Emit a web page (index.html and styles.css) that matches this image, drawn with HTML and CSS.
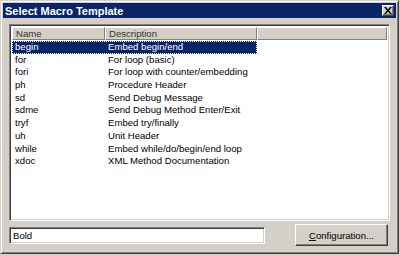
FILE: index.html
```html
<!DOCTYPE html>
<html lang="en">
<head>
    <meta charset="UTF-8">
    <title>Select Macro Template</title>
    <link rel="stylesheet" href="styles.css">
</head>
<body>
    <div class="window">
        <div class="titlebar">
            <span class="title">Select Macro Template</span>
            <button class="close-btn">
                <svg width="8" height="7" viewBox="0 0 8 7">
                    <path d="M0 0h2l2 2.5L6 0h2L5 3.5 8 7H6L4 4.5 2 7H0l3-3.5z" fill="#000"/>
                </svg>
            </button>
        </div>

        <div class="content">
            <div class="list">
                <div class="list-header">
                    <div class="col-name">Name</div>
                    <div class="col-desc">Description</div>
                    <div class="col-rest"></div>
                </div>
                <div class="row selected">
                    <div class="cell-sel"><span class="cell-name">begin</span><span class="cell-desc">Embed begin/end</span></div>
                </div>
                <div class="row"><span class="cell-name">for</span><span class="cell-desc">For loop (basic)</span></div>
                <div class="row"><span class="cell-name">fori</span><span class="cell-desc">For loop with counter/embedding</span></div>
                <div class="row"><span class="cell-name">ph</span><span class="cell-desc">Procedure Header</span></div>
                <div class="row"><span class="cell-name">sd</span><span class="cell-desc">Send Debug Message</span></div>
                <div class="row"><span class="cell-name">sdme</span><span class="cell-desc">Send Debug Method Enter/Exit</span></div>
                <div class="row"><span class="cell-name">tryf</span><span class="cell-desc">Embed try/finally</span></div>
                <div class="row"><span class="cell-name">uh</span><span class="cell-desc">Unit Header</span></div>
                <div class="row"><span class="cell-name">while</span><span class="cell-desc">Embed while/do/begin/end loop</span></div>
                <div class="row"><span class="cell-name">xdoc</span><span class="cell-desc">XML Method Documentation</span></div>
            </div>

            <div class="bottom">
                <input class="text-box" type="text" value="Bold">
                <button class="btn"><u>C</u>onfiguration...</button>
            </div>
        </div>
    </div>
</body>
</html>
```

FILE: styles.css
```css
* {
    margin: 0;
    padding: 0;
    box-sizing: border-box;
}

body {
    background: #d4d0c8;
    font-family: 'Liberation Sans', sans-serif;
    font-size: 9.6px;
    color: #000;
}

.window {
    width: 399px;
    height: 254px;
    background: #d4d0c8;
    border: 1px solid;
    border-color: #d4d0c8 #404040 #404040 #d4d0c8;
    box-shadow: inset 1px 1px 0 #fff, inset -1px -1px 0 #808080;
    padding: 2px;
    display: flex;
    flex-direction: column;
}

.titlebar {
    height: 15px;
    background: #0a246a;
    display: flex;
    align-items: center;
    justify-content: space-between;
    padding: 0 2px 0 2px;
}

.title {
    color: #fff;
    font-family: 'Liberation Sans', sans-serif;
    font-weight: bold;
    font-size: 11px;
}

.close-btn {
    width: 12px;
    height: 11px;
    background: #d4d0c8;
    border: 1px solid;
    border-color: #fff #404040 #404040 #fff;
    box-shadow: inset -1px -1px 0 #808080;
    display: flex;
    align-items: center;
    justify-content: center;
}

.content {
    flex: 1;
    padding: 6px 6px 0 6px;
    display: flex;
    flex-direction: column;
}

.list {
    height: 197px;
    background: #fff;
    border: 1px solid;
    border-color: #808080 #fff #fff #808080;
    box-shadow: inset 1px 1px 0 #404040, inset -1px -1px 0 #d4d0c8;
    padding: 2px;
}

.list-header {
    display: flex;
    height: 13px;
    line-height: 11px;
}

.list-header div {
    background: #d4d0c8;
    border: 1px solid;
    border-color: #fff #808080 #808080 #fff;
    padding-left: 3px;
    color: #333;
}

.col-name {
    width: 93px;
}

.col-desc {
    width: 152px;
}

.col-rest {
    flex: 1;
}

.row {
    height: 12.7px;
    line-height: 12.7px;
    display: flex;
    white-space: nowrap;
}

.cell-name {
    width: 93px;
    padding-left: 3px;
}

.cell-desc {
    padding-left: 3px;
}

.selected {
    margin-top: 1px;
}

.cell-sel {
    width: 245px;
    display: flex;
    background: #0a246a;
    color: #fff;
    outline: 1px dotted #fff;
    outline-offset: -1px;
}

.bottom {
    display: flex;
    align-items: center;
    justify-content: space-between;
    margin-top: 3px;
    padding-right: 2px;
}

.text-box {
    width: 256px;
    height: 17px;
    border: 1px solid;
    border-color: #808080 #fff #fff #808080;
    box-shadow: inset 1px 1px 0 #404040, inset -1px -1px 0 #d4d0c8;
    font-family: 'Liberation Sans', sans-serif;
    font-size: 9.6px;
    padding-left: 3px;
    color: #000;
}

.btn {
    width: 93px;
    height: 22px;
    background: #d4d0c8;
    border: 1px solid;
    border-color: #fff #404040 #404040 #fff;
    box-shadow: inset -1px -1px 0 #808080;
    font-family: 'Liberation Sans', sans-serif;
    font-size: 9.6px;
    color: #000;
}
```
